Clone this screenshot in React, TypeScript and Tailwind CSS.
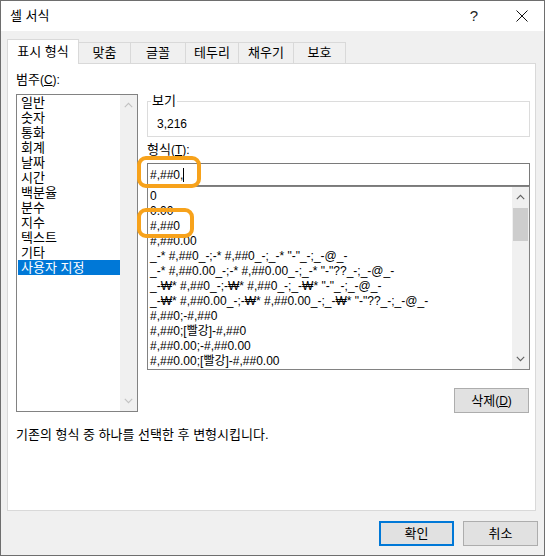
import React from "react";

const K = ({ children }: { children: React.ReactNode }) => <span className="text-[13px]">{children}</span>;

const Chevron = ({ dir, color }: { dir: "up" | "down"; color: string }) => (
  <svg width="9" height="6" viewBox="0 0 9 6">
    <polyline
      points={dir === "up" ? "0.8,5.2 4.5,1.3 8.2,5.2" : "0.8,0.8 4.5,4.7 8.2,0.8"}
      fill="none"
      stroke={color}
      strokeWidth="1.1"
    />
  </svg>
);

const categories = ["일반", "숫자", "통화", "회계", "날짜", "시간", "백분율", "분수", "지수", "텍스트", "기타", "사용자 지정"];

const formats = [
  "0",
  "0.00",
  "#,##0",
  "#,##0.00",
  '_-* #,##0_-;-* #,##0_-;_-* "-"_-;_-@_-',
  '_-* #,##0.00_-;-* #,##0.00_-;_-* "-"??_-;_-@_-',
  '_-₩* #,##0_-;-₩* #,##0_-;_-₩* "-"_-;_-@_-',
  '_-₩* #,##0.00_-;-₩* #,##0.00_-;_-₩* "-"??_-;_-@_-',
  "#,##0;-#,##0",
  "#,##0;[빨강]-#,##0",
  "#,##0.00;-#,##0.00",
  "#,##0.00;[빨강]-#,##0.00",
];

const tabs: { label: string; w: string }[] = [
  { label: "맞춤", w: "w-[52px]" },
  { label: "글꼴", w: "w-[55px]" },
  { label: "테두리", w: "w-[53px]" },
  { label: "채우기", w: "w-[55px]" },
  { label: "보호", w: "w-[52px]" },
];

export default function App() {
  return (
    <div className="relative w-[545px] h-[556px] bg-[#f0f0f0] border border-[#6e6e6e] flex flex-col text-[12px] text-black font-['Liberation_Sans','Noto_Sans_CJK_KR',sans-serif] overflow-hidden">
      {/* Title bar */}
      <div className="h-[30px] bg-white flex items-center pl-[9px] shrink-0">
        <span className="leading-[14px]">
          <K>셀 서식</K>
        </span>
        <span className="ml-auto text-[15px] leading-[16px] text-[#222]">?</span>
        <span className="ml-[38px] mr-[16px] flex items-center">
          <svg width="12" height="12" viewBox="0 0 12 12">
            <line x1="0.5" y1="0.5" x2="11.5" y2="11.5" stroke="#111" strokeWidth="1" />
            <line x1="11.5" y1="0.5" x2="0.5" y2="11.5" stroke="#111" strokeWidth="1" />
          </svg>
        </span>
      </div>

      {/* Body */}
      <div className="flex-1 flex flex-col pl-[6px] pr-[8px] pt-[8px]">
        {/* Tabs */}
        <div className="flex items-end h-[24px] relative z-10">
          <div className="w-[72px] h-[25px] -mb-[1px] bg-white border-l border-t border-r border-[#d9d9d9] flex items-center justify-center leading-[14px]">
            <K>표시 형식</K>
          </div>
          {tabs.map((t) => (
            <div
              key={t.label}
              className={`${t.w} h-[21px] border-t border-r border-[#d9d9d9] flex items-center justify-center leading-[14px]`}
            >
              <K>{t.label}</K>
            </div>
          ))}
        </div>

        {/* Panel */}
        <div className="h-[448px] bg-white border border-[#d9d9d9] flex flex-col shrink-0">
          <div className="flex pl-[8px]">
            {/* Left column */}
            <div className="w-[122px] flex flex-col">
              <div className="mt-[9px] h-[14px] leading-[14px]">
                <K>범주</K>(<span className="underline">C</span>):
              </div>
              <div className="mt-[7px] h-[318px] border border-[#828282] flex">
                <div className="flex-1 pl-[1px]">
                  {categories.map((c, i) => (
                    <div
                      key={c}
                      className={
                        i === categories.length - 1
                          ? "h-[15px] leading-[15px] pl-[3px] bg-[#0078d7] text-white"
                          : "h-[15px] leading-[15px] pl-[3px]"
                      }
                    >
                      <K>{c}</K>
                    </div>
                  ))}
                </div>
                <div className="w-[17px] bg-[#f0f0f0] flex flex-col items-center">
                  <div className="h-[20px] flex items-center justify-center">
                    <Chevron dir="up" color="#c2c2c2" />
                  </div>
                  <div className="mt-auto h-[20px] flex items-center justify-center">
                    <Chevron dir="down" color="#c2c2c2" />
                  </div>
                </div>
              </div>
            </div>

            {/* Right column */}
            <div className="ml-[9px] w-[383px] flex flex-col">
              <div className="mt-[37px] h-[36px] relative border border-[#dcdcdc]">
                <span className="absolute left-[3px] -top-[8px] bg-white px-[1px] h-[14px] leading-[14px]">
                  <K>보기</K>
                </span>
                <div className="pl-[9px] pt-[15px] leading-[14px]">3,216</div>
              </div>
              <div className="mt-[6px] h-[14px] leading-[14px]">
                <K>형식</K>(<span className="underline">T</span>):
              </div>
              <div className="mt-[6px] h-[23px] border border-[#7a7a7a] flex items-center pl-[2px]">
                <span className="leading-[14px]">#,##0,</span>
                <span className="w-[1px] h-[14px] bg-black" />
              </div>
              <div className="h-[184px] border border-[#828282] flex">
                <div className="flex-1 pt-[2px] pl-[2px] overflow-hidden">
                  {formats.map((f) => (
                    <div key={f} className="h-[15px] leading-[15px] whitespace-pre">
                      {f}
                    </div>
                  ))}
                </div>
                <div className="w-[17px] bg-[#f0f0f0] flex flex-col">
                  <div className="h-[20px] flex items-center justify-center">
                    <Chevron dir="up" color="#606060" />
                  </div>
                  <div className="mt-[1px] mx-[1px] h-[33px] bg-[#cdcdcd]" />
                  <div className="mt-auto h-[20px] flex items-center justify-center">
                    <Chevron dir="down" color="#606060" />
                  </div>
                </div>
              </div>
              <div className="flex justify-end mt-[18px] mr-[1px]">
                <div className="w-[75px] h-[25px] bg-[#e1e1e1] border border-[#adadad] flex items-center justify-center leading-[14px]">
                  <K>삭제</K>(<span className="underline">D</span>)
                </div>
              </div>
            </div>
          </div>
          <div className="mt-[15px] pl-[8px] h-[14px] leading-[14px]">
            <K>기존의 형식 중 하나를 선택한 후 변형시킵니다.</K>
          </div>
        </div>

        {/* Footer buttons */}
        <div className="flex justify-end gap-[9px] mt-[10px] -mr-[2px]">
          <div className="w-[75px] h-[25px] bg-[#e1e1e1] border-2 border-[#0078d7] flex items-center justify-center leading-[14px]">
            <K>확인</K>
          </div>
          <div className="w-[75px] h-[25px] bg-[#e1e1e1] border border-[#adadad] flex items-center justify-center leading-[14px]">
            <K>취소</K>
          </div>
        </div>
      </div>

      {/* Orange highlight annotations */}
      <div className="absolute left-[136px] top-[155px] w-[64px] h-[32px] border-[4px] border-[#f7a21b] rounded-[9px]" />
      <div className="absolute left-[136px] top-[207px] w-[57px] h-[30px] border-[4px] border-[#f7a21b] rounded-[9px]" />
    </div>
  );
}
